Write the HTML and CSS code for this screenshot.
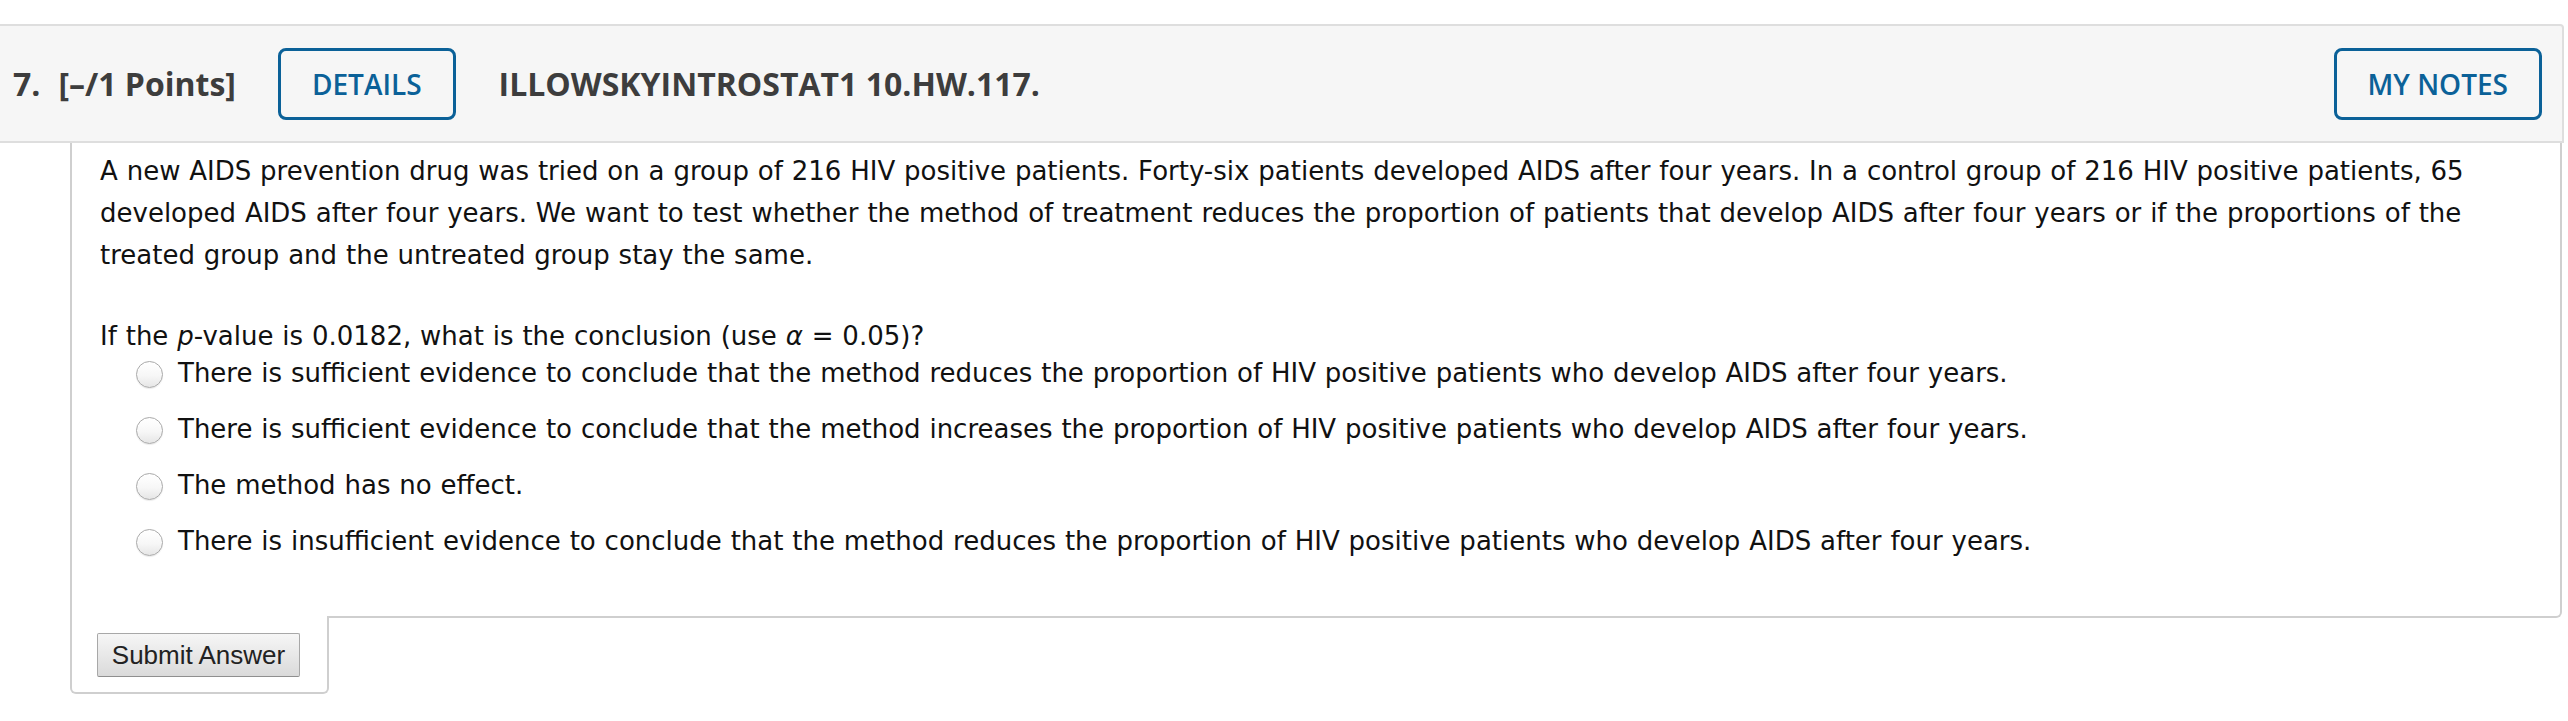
FILE: index.html
```html
<!DOCTYPE html>
<html lang="en">
<head>
<meta charset="utf-8">
<title>Question 7</title>
<link rel="stylesheet" href="styles.css">
</head>
<body>
<div class="question">
  <div class="qhead">
    <span class="qnum">7.</span>
    <span class="qpts">[–/1 Points]</span>
    <button class="btn-outline details" type="button">DETAILS</button>
    <span class="qtitle">ILLOWSKYINTROSTAT1 10.HW.117.</span>
    <button class="btn-outline notes" type="button">MY NOTES</button>
  </div>
  <div class="qbody">
    <p class="stem">A new AIDS prevention drug was tried on a group of 216 HIV positive patients. Forty-six patients developed AIDS after four years. In a control group of 216 HIV positive patients, 65 developed AIDS after four years. We want to test whether the method of treatment reduces the proportion of patients that develop AIDS after four years or if the proportions of the treated group and the untreated group stay the same.</p>
    <p class="prompt">If the <i>p</i>-value is 0.0182, what is the conclusion (use <i>α</i> = 0.05)?</p>
    <ul class="choices">
      <li class="choice"><span class="radio"></span><span>There is sufficient evidence to conclude that the method reduces the proportion of HIV positive patients who develop AIDS after four years.</span></li>
      <li class="choice"><span class="radio"></span><span>There is sufficient evidence to conclude that the method increases the proportion of HIV positive patients who develop AIDS after four years.</span></li>
      <li class="choice"><span class="radio"></span><span>The method has no effect.</span></li>
      <li class="choice"><span class="radio"></span><span>There is insufficient evidence to conclude that the method reduces the proportion of HIV positive patients who develop AIDS after four years.</span></li>
    </ul>
  </div>
  <div class="submit-tab">
    <button class="submit" type="button">Submit Answer</button>
  </div>
</div>
</body>
</html>
```
FILE: styles.css
```css
* {
  box-sizing: border-box;
}

body {
  margin: 0;
  background: #ffffff;
  font-family: "DejaVu Sans", Verdana, sans-serif;
  color: #111111;
}

.question {
  width: 2564px;
  padding-top: 24px;
}

.qhead {
  display: flex;
  align-items: center;
  height: 119px;
  padding: 0 20px 0 13px;
  background: #f6f6f6;
  border: 2px solid #dedede;
  border-left: none;
  border-top-right-radius: 4px;
  font-family: "Open Sans", sans-serif;
  font-weight: 700;
  font-size: 32px;
  color: #3d3d3d;
  white-space: nowrap;
}

.qnum {
  margin-right: 18px;
}

.qpts {
  margin-right: 42px;
}

.btn-outline {
  height: 72px;
  padding: 0 31px;
  border: 3px solid #0b6198;
  border-radius: 8px;
  background: transparent;
  color: #0b6198;
  font-family: "Open Sans", sans-serif;
  font-weight: 600;
  font-size: 28px;
  line-height: 1;
}

.details {
  margin-right: 43px;
}

.notes {
  margin-left: auto;
}

.qbody {
  margin: 0 2px 0 70px;
  padding: 7px 38px 40px 28px;
  border: 2px solid #cfcfcf;
  border-top: none;
  border-bottom-right-radius: 6px;
  font-size: 26px;
  line-height: 42px;
  word-spacing: 0.6px;
}

.stem {
  margin: 0;
}

.prompt {
  margin: 39px 0 0;
}

.choices {
  list-style: none;
  margin: -5px 0 0;
  padding: 0 0 0 36px;
}

.choice {
  display: flex;
  align-items: center;
  gap: 15px;
  height: 42px;
  margin-bottom: 14px;
}

.radio {
  flex: none;
  width: 27px;
  height: 27px;
  margin-top: 3px;
  border-radius: 50%;
  border: 1px solid #a9a9a9;
  background: linear-gradient(#ffffff 0%, #f7f7f7 55%, #e6e6e6 100%);
  box-shadow: inset 0 1px 1px rgba(255, 255, 255, 0.9), 0 1px 1px rgba(0, 0, 0, 0.08);
}

.submit-tab {
  width: 259px;
  margin: -2px 0 0 70px;
  padding: 17px 0 15px 25px;
  background: #ffffff;
  border: 2px solid #cfcfcf;
  border-top: none;
  border-radius: 0 0 6px 6px;
}

.submit {
  display: block;
  width: 203px;
  height: 44px;
  padding: 0;
  border: 1px solid #a8a8a8;
  border-bottom-color: #8f8f8f;
  border-radius: 2px;
  background: linear-gradient(#f6f6f6, #dadada);
  color: #222222;
  font-family: "Liberation Sans", Arial, sans-serif;
  font-size: 26px;
  line-height: 1;
}
```
